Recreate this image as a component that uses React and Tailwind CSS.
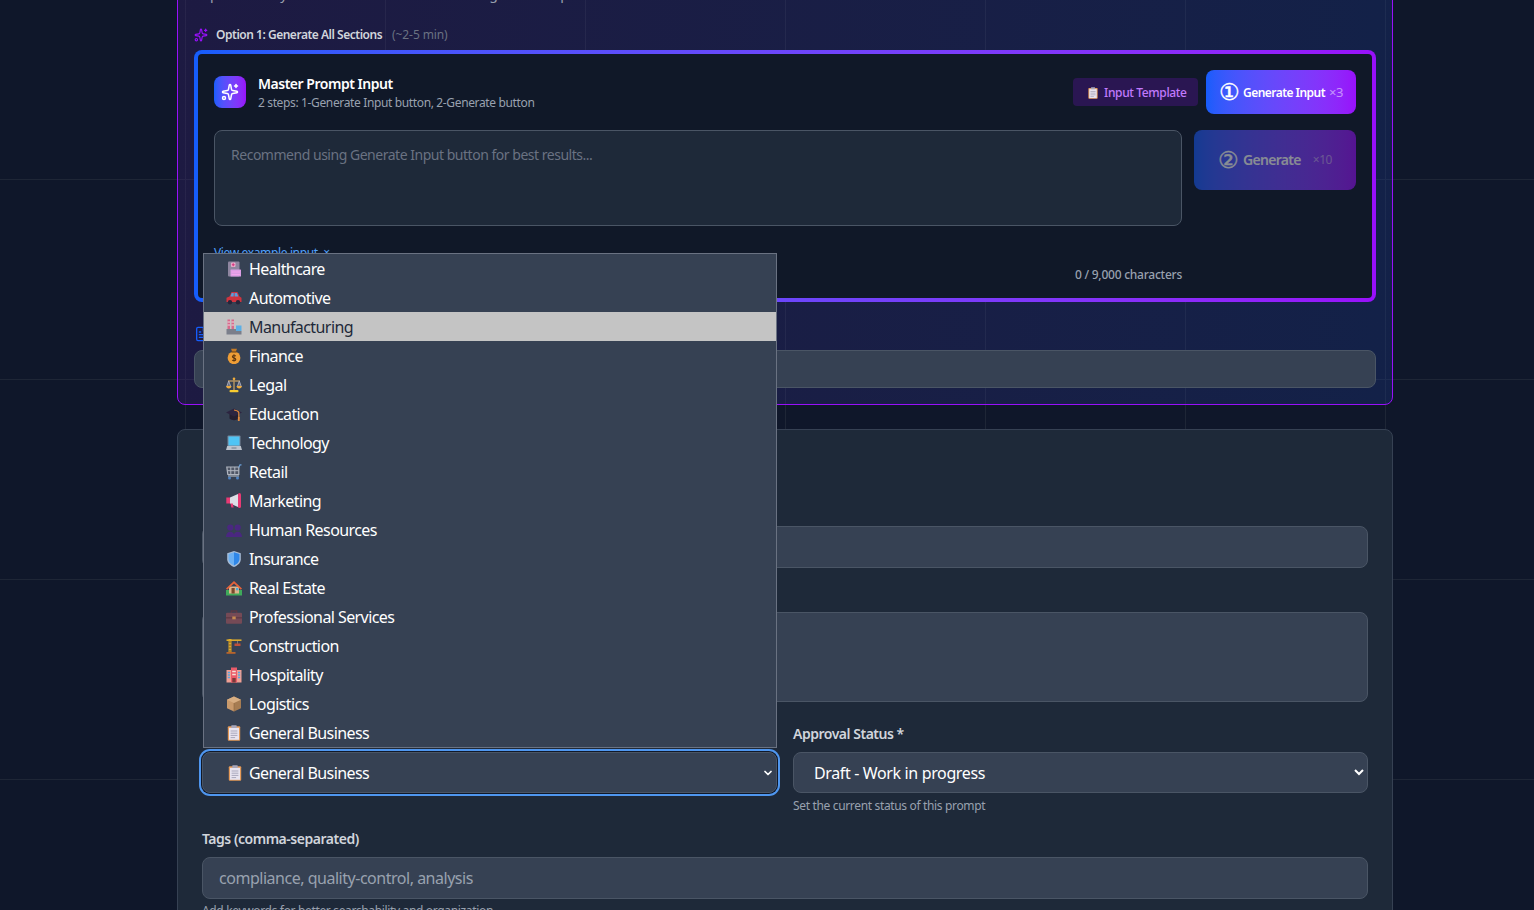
import { ChevronDown, FileText, Sparkles } from 'lucide-react';

const Icons = {
  healthcare: (
    <>
      <rect x="2" y="0.5" width="11.500" height="15" rx="1" fill="#8f86a0" />
      <rect x="5" y="1.500" width="4.500" height="4.500" rx="1" fill="#eab0cc" />
      <path d="M7.200 2.300v2.900M5.800 3.800h2.900" stroke="#d6337f" strokeWidth="1.100" />
      <rect x="4.500" y="8.500" width="10.500" height="7" rx=".5" fill="#dc9de4" />
      <path d="M5.500 11h8.500M5.500 13.500h8.500" stroke="#f4a4ec" strokeWidth="1.200" />
    </>
  ),
  automotive: (
    <>
      <path d="M3.500 6.500l2-4.500h6l2 4.500 2 1.200v4.300H.5V7.700z" fill="#d0343f" />
      <path d="M5.700 3h2v3.500h-3.300zM8.600 3h2.300l1.400 3.500H8.600z" fill="#58a0de" />
      <circle cx="4" cy="12.300" r="2.200" fill="#28253a" />
      <circle cx="12" cy="12.300" r="2.200" fill="#28253a" />
    </>
  ),
  manufacturing: (
    <>
      <rect x="1.500" y="0.500" width="2.500" height="10" fill="#d86a8c" />
      <rect x="5.500" y="0.500" width="2.500" height="10" fill="#d86a8c" />
      <path d="M1.500 3h2.500M5.500 3h2.500M1.500 6h2.500M5.500 6h2.500" stroke="#e9d9de" strokeWidth="1" />
      <rect x="10" y="6.500" width="5.500" height="5.500" fill="#5cb0e6" />
      <path d="M.5 10h9.500v2h5.500v3.500H.5z" fill="#7b7f8b" />
    </>
  ),
  finance: (
    <>
      <path d="M5 .8h6L9.700 4H6.300z" fill="#c57b26" />
      <circle cx="8" cy="9.800" r="6.400" fill="#ee9d36" />
      <rect x="5.300" y="3.300" width="5.400" height="1.300" fill="#7a4c1a" />
      <path d="M9.800 8C9 7.200 6.400 7.200 6.400 8.700S9.800 10 9.800 11.500 7 13 6.200 12M8 6.300v7.200" fill="none" stroke="#5b3510" strokeWidth="1.100" />
    </>
  ),
  legal: (
    <>
      <path d="M8 1v12M2 4h12" stroke="#b09060" strokeWidth="1.500" />
      <path d="M2.700 4L.8 9.500h4zM13.300 4l-2 5.500h4z" fill="#6a6f80" stroke="#b9b9c5" strokeWidth=".8" />
      <path d="M.2 9h5.200a2.600 2.400 0 0 1-5.200 0zM10.600 9h5.200a2.600 2.400 0 0 1-5.200 0z" fill="#f0ac3c" />
      <rect x="3.500" y="13" width="9" height="2.200" rx="1" fill="#f8cc30" />
      <circle cx="8" cy="1.800" r="1.300" fill="#f0ac3c" />
    </>
  ),
  education: (
    <>
      <path d="M3.500 7.500v5c2.500 2.200 6.500 2.200 9 0v-5z" fill="#241e30" />
      <path d="M0 6.500L8 2.500l8 4-8 4z" fill="#2c2440" />
      <path d="M8 4c2.200.3 4.300 1.200 4.800 2.500v6" fill="none" stroke="#e0883c" strokeWidth="1.200" />
      <rect x="11.900" y="11" width="1.800" height="4" fill="#e0883c" />
    </>
  ),
  technology: (
    <>
      <rect x="1.500" y="0.500" width="13" height="11" rx="1" fill="#76869a" />
      <rect x="2.500" y="1.500" width="11" height="9" fill="#50c4f4" />
      <path d="M1.200 11h13.600l1.200 4H0z" fill="#bcc2cc" />
      <rect x="5.500" y="12.400" width="5" height="1.200" fill="#7f8794" />
    </>
  ),
  retail: (
    <>
      <path d="M.8 3h12v7.500H1.800z" fill="#4f5666" stroke="#b0b5bf" strokeWidth="1.200" />
      <path d="M4.800 3v7.500M8.800 3v7.500M1.300 6.700h11.500" stroke="#b0b5bf" strokeWidth="1" />
      <path d="M12.800 3.500l1.200-2.700h1.500" fill="none" stroke="#6a9fd8" strokeWidth="1.200" />
      <path d="M2 12h11" stroke="#b0b5bf" strokeWidth="1.200" />
      <circle cx="3.500" cy="14" r="1.500" fill="#4f84c4" />
      <circle cx="11.500" cy="14" r="1.500" fill="#4f84c4" />
    </>
  ),
  marketing: (
    <>
      <rect x=".3" y="4.500" width="3.700" height="6" fill="#e83a74" />
      <path d="M4 4.500l8-3.500v13l-8-3.500z" fill="#dcdee6" />
      <path d="M4.500 10.500h2.300l.8 4H5.300z" fill="#e83a74" />
      <rect x="12" y="0" width="3" height="15" rx="1.500" fill="#e83a74" />
    </>
  ),
  hr: (
    <>
      <circle cx="4.300" cy="5.500" r="3.100" fill="#4a2780" />
      <circle cx="11.700" cy="5.500" r="3.100" fill="#4a2780" />
      <path d="M0 15c0-7 8.500-7 8.500 0zM7.500 15c0-7 8.500-7 8.500 0z" fill="#4a2780" />
    </>
  ),
  insurance: (
    <>
      <path d="M8 0l6.800 2.200v6c0 3.600-3.200 6.300-6.800 7.800-3.600-1.500-6.800-4.200-6.800-7.800v-6z" fill="#a8bcd6" />
      <path d="M8 1.300l5.500 1.800v5c0 3-2.600 5.200-5.500 6.400z" fill="#2f87e8" />
      <path d="M8 1.300L2.500 3.100v5c0 3 2.600 5.200 5.500 6.400z" fill="#6cb0f2" />
    </>
  ),
  realestate: (
    <>
      <rect x="0" y="10" width="16" height="5.500" fill="#3faa5a" />
      <rect x="3" y="6.500" width="10" height="7" fill="#dcb48c" />
      <path d="M0 8.500L8 1l8 7.500-1.200 1.200L8 3.500 1.200 9.700z" fill="#e4623a" />
      <rect x="5.500" y="8" width="3.200" height="5.500" fill="#7a4a2c" />
      <rect x="10" y="8" width="2.300" height="2.300" fill="#4aa8d8" />
    </>
  ),
  professional: (
    <>
      <path d="M5.300 4V2h5.400v2" fill="none" stroke="#5a3844" strokeWidth="1.400" />
      <rect x="0" y="3.800" width="16" height="11" rx="1" fill="#754a56" />
      <rect x="0" y="8.300" width="16" height="1.100" fill="#5a3541" />
      <rect x="6.300" y="7.500" width="3.400" height="2.800" fill="#c68a50" />
    </>
  ),
  construction: (
    <>
      <path d="M4 1v14" stroke="#dcaa2e" strokeWidth="3" />
      <path d="M2.700 4h2.600M2.700 7h2.600M2.700 10h2.600M2.700 13h2.600" stroke="#6c4e1e" strokeWidth=".8" />
      <path d="M.5 2.200h15" stroke="#dcaa2e" strokeWidth="1.600" />
      <path d="M11.500 3v3" stroke="#777" strokeWidth="1" />
      <rect x="8.500" y="5.500" width="6" height="2.500" fill="#c0503a" />
      <rect x=".5" y="14" width="9" height="1.800" fill="#b8642c" />
    </>
  ),
  hospitality: (
    <>
      <rect x="0.500" y="3" width="15" height="12.500" fill="#f0a094" />
      <rect x="5" y="0.500" width="6" height="15" fill="#ea5c6a" />
      <path d="M1.800 5.500h2.200M1.800 8h2.200M1.800 10.500h2.200M12 5.500h2.200M12 8h2.200M12 10.500h2.200" stroke="#5aa8e0" strokeWidth="1.500" />
      <path d="M6.200 4.500h3.600M6.200 7.500h3.600" stroke="#f4e2d8" strokeWidth="1.500" />
      <rect x="6.300" y="11" width="3.400" height="4.500" fill="#7a3a3a" />
    </>
  ),
  logistics: (
    <>
      <path d="M8 .5l7 3.300v8.400L8 15.500z" fill="#a67c52" />
      <path d="M8 .5L1 3.800v8.400L8 15.500z" fill="#c99a6c" />
      <path d="M1 3.800L8 7l7-3.200L8 .5z" fill="#d8ae82" />
      <path d="M8 7v8.500" stroke="#8d6740" strokeWidth=".6" />
    </>
  ),
  general: (
    <>
      <rect x="1.800" y="1.300" width="12.400" height="14.500" rx="1" fill="#e59a58" />
      <rect x="3" y="2.800" width="10" height="12" fill="#e8e4f0" />
      <rect x="5.300" y=".2" width="5.400" height="2.800" rx=".6" fill="#a9a7bb" />
      <path d="M4.600 6h6.800M4.600 8.200h6.800M4.600 10.400h6.800M4.600 12.600h4.500" stroke="#a9a7bb" strokeWidth="1" />
    </>
  ),
};

const categorias = [
  ['healthcare', 'Healthcare'],
  ['automotive', 'Automotive'],
  ['manufacturing', 'Manufacturing'],
  ['finance', 'Finance'],
  ['legal', 'Legal'],
  ['education', 'Education'],
  ['technology', 'Technology'],
  ['retail', 'Retail'],
  ['marketing', 'Marketing'],
  ['hr', 'Human Resources'],
  ['insurance', 'Insurance'],
  ['realestate', 'Real Estate'],
  ['professional', 'Professional Services'],
  ['construction', 'Construction'],
  ['hospitality', 'Hospitality'],
  ['logistics', 'Logistics'],
  ['general', 'General Business'],
];

function Emoji({ name, className = 'w-4 h-4' }) {
  return (
    <svg viewBox="0 0 16 16" className={`shrink-0 ${className}`}>
      {Icons[name]}
    </svg>
  );
}

function Label({ children }) {
  return <label className="block h-5 mb-2 text-sm leading-5 font-semibold text-gray-300">{children}</label>;
}

export default function App() {
  return (
    <div className="h-[910px] overflow-hidden bg-[#0f172a] bg-[linear-gradient(to_right,#1e2636_1px,transparent_1px),linear-gradient(to_bottom,#1e2636_1px,transparent_1px)] bg-[size:200px_200px] bg-[position:185px_179px] font-['Noto_Sans',sans-serif] tracking-[-0.48px]">
      <div className="w-[1216px] ml-[177px] -mt-[41px]">
        {/* Panel de generacion */}
        <div className="border border-purple-600 rounded-lg bg-gradient-to-r from-[#3e217a]/30 to-blue-900/30 px-4 pt-6 pb-4">
          <p className="h-5 text-sm leading-5 text-gray-400 whitespace-nowrap">
            AI presents key sections then fills all the fields to good clean plans
          </p>

          <div className="mt-[23px] mb-[7px] h-4 flex items-center gap-2">
            <Sparkles className="w-[14px] h-[14px] text-purple-600" />
            <span className="text-xs font-semibold text-gray-300">Option 1: Generate All Sections</span>
            <span className="ml-[2px] text-xs text-gray-500 tracking-[-0.1px]">(~2-5 min)</span>
          </div>

          <div className="h-[252px] p-1 rounded-lg bg-gradient-to-r from-blue-600 to-purple-600">
            <div className="h-full p-4 rounded bg-gray-900">
              <div className="h-11 mb-4 flex items-center">
                <div className="w-8 h-8 rounded-lg bg-gradient-to-r from-blue-600 to-purple-600 flex items-center justify-center">
                  <Sparkles className="w-[18px] h-[18px] text-white" />
                </div>
                <div className="ml-3">
                  <div className="text-sm font-semibold text-white leading-[20px]">Master Prompt Input</div>
                  <div className="mt-px text-xs text-gray-400 leading-4 tracking-[-0.36px]">2 steps: 1-Generate Input button, 2-Generate button</div>
                </div>
                <button className="ml-auto h-7 w-[125px] rounded bg-purple-600/20 text-xs font-medium text-purple-400 tracking-[-0.36px] flex items-center pl-[14px] pt-[2px] gap-[5px]">
                  <Emoji name="general" className="w-3 h-3" />
                  Input Template
                </button>
                <button className="ml-2 h-11 w-[150px] rounded-lg bg-gradient-to-r from-blue-600 to-purple-600 text-white flex items-center pl-[13px]">
                  <span className="w-5 text-[23px] leading-none font-['DejaVu_Sans',sans-serif] [-webkit-text-stroke:0.4px_white] flex justify-center">①</span>
                  <span className="ml-1 pt-[2px] text-xs font-semibold tracking-[-0.54px]">Generate Input</span>
                  <span className="ml-1 pt-[2px] text-[13px] text-white/50">×3</span>
                </button>
              </div>

              <div className="flex gap-3">
                <div className="w-[968px]">
                  <textarea
                    placeholder="Recommend using Generate Input button for best results..."
                    className="block w-full h-24 px-4 py-[14px] resize-none rounded-lg bg-gray-800 border border-gray-600 text-sm leading-5 text-white placeholder:text-gray-500 outline-none"
                  />
                  <div className="mt-[19px] h-4 text-xs leading-4 text-blue-400 tracking-[-0.36px]">View example input &nbsp;×</div>
                  <div className="mt-[6px] h-4 text-xs leading-4 font-medium text-gray-400 text-right tracking-[-0.24px]">0 / 9,000 characters</div>
                </div>
                <button className="w-[162px] h-[60px] rounded-lg bg-gradient-to-r from-blue-600 to-purple-600 opacity-50 text-white flex items-center pl-[24px]">
                  <span className="w-5 text-[23px] leading-none font-['DejaVu_Sans',sans-serif] [-webkit-text-stroke:0.4px_white] flex justify-center">②</span>
                  <span className="ml-[5px] text-sm font-semibold tracking-[-0.7px]">Generate</span>
                  <span className="ml-3 text-xs text-white/50">×10</span>
                </button>
              </div>
            </div>
          </div>

          <div className="mt-6 mb-2 h-4 flex items-center">
            <FileText className="w-4 h-4 text-blue-600" />
          </div>
          <div className="h-[38px] rounded-lg bg-gray-700 border border-gray-600" />
        </div>

        {/* Formulario */}
        <div className="mt-6 border border-gray-700 rounded-lg bg-gray-800 p-6">
          <div className="h-7 mb-4" />

          <Label />
          <input className="block w-full h-[42px] mb-4 rounded-lg bg-gray-700 border border-gray-600 outline-none" />

          <Label />
          <textarea className="block w-full h-[90px] mb-[22px] rounded-lg bg-gray-700 border border-gray-600 outline-none resize-none" />

          <div className="grid grid-cols-2 gap-4">
            <div>
              <Label />
              <div className="relative">
                <div className="h-[41px] rounded-lg bg-gray-700 border border-gray-600 ring-2 ring-[#4f96ef] ring-offset-1 ring-offset-gray-900 flex items-center pl-6 pr-[2px] gap-[6px] text-base text-white tracking-[-0.58px]">
                  <Emoji name="general" />
                  General Business
                  <ChevronDown className="ml-auto w-3 h-3" strokeWidth={3.5} />
                </div>
                {/* lista abierta del select */}
                <div className="absolute left-px right-0 bottom-[calc(100%+4px)] bg-gray-700 border border-gray-500 tracking-[-0.58px]">
                  {categorias.map(([icono, nombre]) => (
                    <div
                      key={icono}
                      className={`h-[29px] pl-[22px] flex items-center gap-[7px] text-base ${
                        nombre === 'Manufacturing' ? 'bg-[#c4c4c4] text-gray-800' : 'text-white'
                      }`}
                    >
                      <Emoji name={icono} />
                      {nombre}
                    </div>
                  ))}
                </div>
              </div>
            </div>
            <div>
              <Label>Approval Status *</Label>
              <select
                defaultValue="draft"
                className="block w-full h-[41px] px-4 rounded-lg bg-gray-700 border border-gray-600 text-base text-white tracking-[-0.36px] outline-none"
              >
                <option value="draft">Draft - Work in progress</option>
              </select>
              <p className="mt-[5px] h-4 text-xs leading-4 text-gray-400 tracking-[-0.34px]">Set the current status of this prompt</p>
            </div>
          </div>

          <div className="mt-[15px]">
            <Label>Tags (comma-separated)</Label>
            <input
              placeholder="compliance, quality-control, analysis"
              className="block w-full h-[42px] px-4 rounded-lg bg-gray-700 border border-gray-600 text-base text-white placeholder:text-gray-400 outline-none"
            />
            <p className="mt-1 h-4 text-xs leading-4 text-gray-400 tracking-[-0.34px]">Add keywords for better searchability and organization</p>
          </div>
        </div>
      </div>
    </div>
  );
}
